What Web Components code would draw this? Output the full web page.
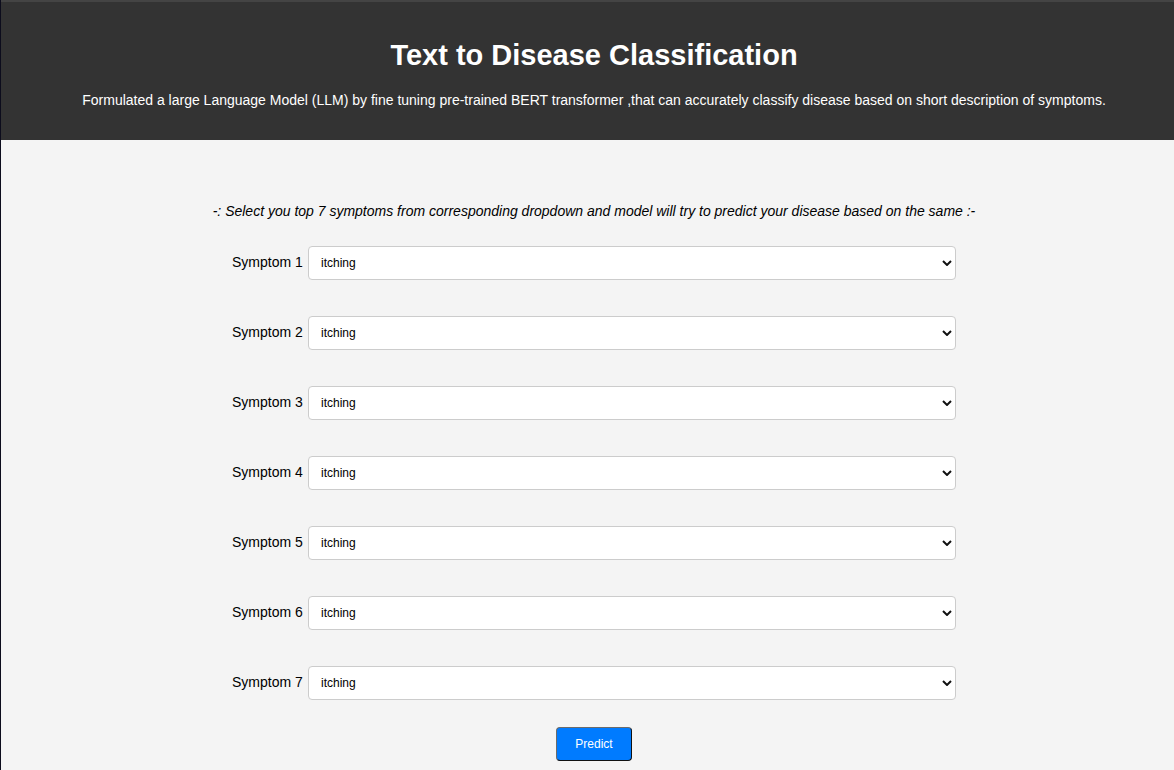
<!DOCTYPE html>
<html lang="en">
<head>
<meta charset="utf-8">
<title>Text to Disease Classification</title>
<style>
  html, body { margin: 0; }
  body {
    min-height: 100vh;
    box-sizing: border-box;
    border-left: 1px solid #0c0c1c;
    background: #f4f4f4;
    color: #000;
    font: 14px/18px Arial, "Liberation Sans", sans-serif;
  }
</style>
</head>
<body>
<disease-app></disease-app>
<script>
class PageHeader extends HTMLElement {
  constructor() {
    super();
    this.attachShadow({ mode: 'open' }).innerHTML = `
      <style>
        :host { display: block; }
        header {
          border-top: 2px solid #444;
          background: #333;
          color: #fff;
          text-align: center;
          padding: 36px 0 31px 13px;
        }
        h1 { margin: 0 0 19px; font-size: 29px; line-height: 34px; }
        p { margin: 0; }
      </style>
      <header>
        <h1><slot name="title"></slot></h1>
        <p><slot></slot></p>
      </header>`;
  }
}
customElements.define('page-header', PageHeader);

class SymptomSelect extends HTMLElement {
  connectedCallback() {
    const n = this.getAttribute('number');
    this.attachShadow({ mode: 'open' }).innerHTML = `
      <style>
        :host { display: flex; justify-content: center; align-items: center; gap: 4px; }
        label { flex: 0 0 72px; padding-bottom: 2px; white-space: nowrap; }
        .field { flex: 0 1 648px; display: grid; align-items: center; }
        select {
          grid-area: 1 / 1;
          appearance: none;
          width: 100%;
          height: 34px;
          margin: 0;
          padding: 0 24px 0 12px;
          border: 1px solid #ccc;
          border-radius: 4px;
          background: #fff;
          color: #000;
          font: 12px Arial, "Liberation Sans", sans-serif;
        }
        svg {
          grid-area: 1 / 1;
          justify-self: end;
          width: 10px;
          height: 6px;
          margin-right: 4px;
          pointer-events: none;
        }
      </style>
      <label for="symptom">Symptom ${n}</label>
      <div class="field">
        <select id="symptom" name="symptom${n}"><option>itching</option></select>
        <svg viewBox="0 0 10 6" aria-hidden="true"><path d="M1 1l4 4 4-4" fill="none" stroke="#111" stroke-width="2"/></svg>
      </div>`;
  }
}
customElements.define('symptom-select', SymptomSelect);

class PredictButton extends HTMLElement {
  constructor() {
    super();
    this.attachShadow({ mode: 'open' }).innerHTML = `
      <style>
        :host { display: flex; justify-content: center; }
        button {
          height: 34px;
          margin: 0;
          padding: 0 18px;
          border: 1px solid;
          border-color: #6b6b6b #111 #111 #6b6b6b;
          border-radius: 4px;
          background: #007bff;
          color: #fff;
          font: 12px Arial, "Liberation Sans", sans-serif;
          cursor: pointer;
        }
      </style>
      <button type="button"><slot></slot></button>`;
  }
}
customElements.define('predict-button', PredictButton);

class DiseaseApp extends HTMLElement {
  constructor() {
    super();
    this.attachShadow({ mode: 'open' }).innerHTML = `
      <style>
        :host { display: block; }
        main { padding: 62px 0 9px 13px; }
        .hint { margin: 0 0 26px; text-align: center; font-style: italic; }
        form { display: grid; gap: 36px; margin-bottom: 27px; }
      </style>
      <page-header>
        <span slot="title">Text to Disease Classification</span>
        Formulated a large Language Model (LLM) by fine tuning pre-trained BERT transformer ,that can accurately classify disease based on short description of symptoms.
      </page-header>
      <main>
        <p class="hint">-: Select you top 7 symptoms from corresponding dropdown and model will try to predict your disease based on the same :-</p>
        <form>
          ${[1, 2, 3, 4, 5, 6, 7].map(n => `<symptom-select number="${n}"></symptom-select>`).join('')}
        </form>
        <predict-button>Predict</predict-button>
      </main>`;
  }
}
customElements.define('disease-app', DiseaseApp);
</script>
</body>
</html>
